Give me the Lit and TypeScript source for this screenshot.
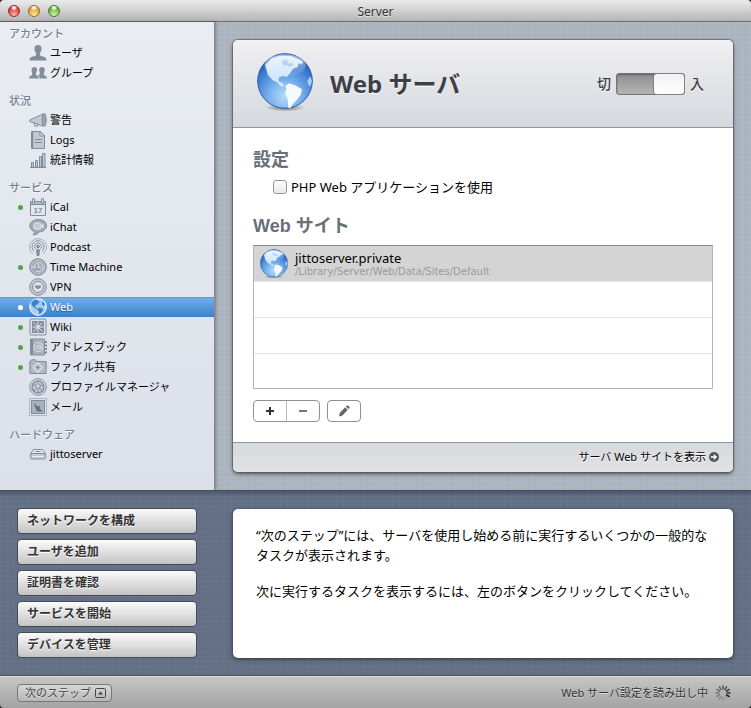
import { LitElement, html, css, svg, nothing } from "lit";
import type { SVGTemplateResult, TemplateResult } from "lit";
import { customElement, property, state } from "lit/decorators.js";
import { classMap } from "lit/directives/class-map.js";

interface Item {
  id: string;
  label: string;
  running?: boolean;
}

interface Section {
  title: string;
  items: Item[];
}

const SECTIONS: Section[] = [
  {
    title: "アカウント",
    items: [
      { id: "user", label: "ユーザ" },
      { id: "group", label: "グループ" },
    ],
  },
  {
    title: "状況",
    items: [
      { id: "alert", label: "警告" },
      { id: "logs", label: "Logs" },
      { id: "stats", label: "統計情報" },
    ],
  },
  {
    title: "サービス",
    items: [
      { id: "ical", label: "iCal", running: true },
      { id: "ichat", label: "iChat" },
      { id: "podcast", label: "Podcast" },
      { id: "timemachine", label: "Time Machine", running: true },
      { id: "vpn", label: "VPN" },
      { id: "web", label: "Web", running: true },
      { id: "wiki", label: "Wiki", running: true },
      { id: "addressbook", label: "アドレスブック", running: true },
      { id: "files", label: "ファイル共有", running: true },
      { id: "profile", label: "プロファイルマネージャ" },
      { id: "mail", label: "メール" },
    ],
  },
  {
    title: "ハードウェア",
    items: [{ id: "server", label: "jittoserver" }],
  },
];

const STEPS = [
  "ネットワークを構成",
  "ユーザを追加",
  "証明書を確認",
  "サービスを開始",
  "デバイスを管理",
];

const INK = "#828d9c";
const PALE = "#c3c9d2";

const ICONS: Record<string, SVGTemplateResult> = {
  user: svg`<path fill=${INK} d="M9 1c2.300 0 3.600 1.500 3.600 3.700 0 1.900-.8 3.300-1.700 4.300v1.700c0 .8 1 1.200 3 1.800 2.500.6 3.600 1.300 3.600 4H.5c0-2.700 1.100-3.400 3.600-4 2-.6 3-1 3-1.800V9C6.200 8 5.400 6.600 5.400 4.700 5.400 2.500 6.700 1 9 1z"/>`,
  group: svg`<g fill=${INK}><path d="M5.500 3c1.700 0 2.600 1.100 2.600 2.800 0 1.500-.6 2.400-1.200 3.100v1.600c0 1 3 1 3 4H0c0-3 3.200-3 3.200-4V8.900C2.900 8.300 2.500 7.300 2.500 5.800 2.500 4.100 3.800 3 5.500 3z"/><path d="M13 3c1.700 0 2.800 1.100 2.800 2.800 0 1.500-.5 2.400-1 3.100v1.600c0 1 3.200 1 3.200 4h-7.300c-.1-2.200-1.300-3.100-2-3.500 1.200-.4 2.300-.4 2.300-1V8.900c-.4-.6-.8-1.600-.8-3.100C10.200 4.100 11.300 3 13 3z"/></g>`,
  alert: svg`<g stroke=${INK} fill=${PALE}><path d="M.8 9 14 3v12L.8 10.500z"/><path d="M5.500 12v3h3.500v-2" fill="none"/><ellipse cx="15.200" cy="9" rx="2" ry="6.500" fill="#9aa4b1"/></g>`,
  logs: svg`<g stroke=${INK} fill=${PALE}><path d="M2.500.5h9l4 4v13h-13z"/><path fill="#e4e7ec" d="M11 .5v4.500h4.500z"/><path d="M3.500 1v16" stroke-width="1.500"/><path d="M6 8.500h7M6 11.500h7"/></g>`,
  stats: svg`<g stroke=${INK} fill=${PALE}><path d="M2.500 11.500h2V16h-2zM6.500 9.500h2V16h-2zM10.500 5.500h2V16h-2zM13.500 2.500h2.500V16h-2.500z"/><path d="M1 16.500h16"/></g>`,
  ical: svg`<g stroke=${INK} fill="none"><path fill="#e3e6eb" d="M1.500 3.500h15v14h-15z"/><path fill=${INK} fill-opacity=".5" d="M1.500 3.500h15v3h-15z"/><path fill="#e8ebf0" d="M3.500.8h2v4h-2zM12.500.8h2v4h-2z"/></g><text x="9" y="15" text-anchor="middle" font-size="8" font-weight="bold" font-family="Liberation Sans, sans-serif" fill=${INK}>17</text>`,
  ichat: svg`<path fill="#a2aab6" stroke=${INK} d="M9.500 1.500c4.500 0 8 2.500 8 6.200s-3.500 6.200-7.500 6.200c-1 2-3.500 3.300-6 3 1.200-1 1.400-2.500 1-3.600C2.300 12.300.8 10.200.8 7.800c0-3.700 4-6.300 8.700-6.300z"/><rect x="5" y="5" width="7" height="6" rx="1.500" fill=${PALE} stroke="#e8ebf0"/><path fill="#e8ebf0" d="m12 8 2.500-2.500v5z"/>`,
  podcast: svg`<g fill="none" stroke=${INK}><path d="M4 16a8.500 8.500 0 1 1 10 0" stroke="#a3abb7"/><path d="M5.300 13.500a6 6 0 1 1 7.400 0"/><path d="M6.500 11a3.500 3.500 0 1 1 5 0"/></g><circle cx="9" cy="8.500" r="1.800" fill=${INK}/><path fill=${INK} d="M7 11.500q2-1 4 0L10.300 18H7.700z"/>`,
  timemachine: svg`<circle cx="9" cy="9" r="8.300" fill="#a0a8b5" stroke=${INK}/><circle cx="9" cy="9" r="6.800" fill="none" stroke=${PALE}/><path fill="none" stroke="#e2e6eb" d="M5 9.500A4.500 4.500 0 1 1 7 13M3.200 8.200 5 10.200l2-2M9.500 6v3.500H12"/>`,
  vpn: svg`<circle cx="9" cy="9" r="8.300" fill=${PALE} stroke=${INK}/><circle cx="9" cy="9" r="5.500" fill="#dfe2e8" stroke=${INK}/><path fill=${INK} d="M6 7.500h6V9.500h-1l-1 1.500H8L7 9.500H6z"/>`,
  web: svg`<circle cx="9" cy="9" r="8.300" fill="#a9cdf0" stroke="#fff"/><path fill="#3f80c8" d="M2 5.500C3 3.500 5 2 7.500 1.300l1 1.500 2 .5-1 2L7.500 7 6 7.500l.5 2L9 10.200l-.5 1.300L5 9.500 3 7.500zM10 9.800l3 .5 1.200 1.700-1.500 2.500-2.500 2-.3-3-1.400-2zM13 3l3 3-1 2-2-1.500z"/>`,
  wiki: svg`<rect x="1" y="1" width="16" height="16" rx="1" fill="#dfe2e8" stroke=${INK}/><rect x="3" y="3" width="12" height="12" fill=${INK}/><path stroke="#e2e6eb" d="M9 3.500v11M3.500 9h11M4.500 4.500l9 9M13.500 4.500l-9 9"/><circle cx="9" cy="9" r="1.500" fill="#e2e6eb"/>`,
  addressbook: svg`<path fill="#a9b1bd" stroke=${INK} d="M1.500 1h14v16h-14z"/><path stroke=${INK} stroke-width="2" d="M3 1v16"/><path stroke=${INK} stroke-width="2" stroke-dasharray="2 1.500" d="M17 3v13"/><circle cx="9.500" cy="9" r="4.500" fill="none" stroke="#dfe3e8"/><circle cx="9.500" cy="9" r="1.700" fill="none" stroke="#dfe3e8"/><path fill="none" stroke="#dfe3e8" d="M11.300 7v3q1 1 2-.5"/>`,
  files: svg`<path fill="#b1b8c3" stroke=${INK} d="M.8 15.500v-12h1l.7-1.700h4l.8 1.700h9.900v12z"/><path fill=${PALE} stroke="#eef0f3" d="m8.800 4.500 5 5-5 5-5-5z"/><path fill=${INK} d="m8.800 7 2 3H9.500v1.500H8V10H6.800z"/>`,
  profile: svg`<circle cx="9" cy="9" r="8.300" fill="#dfe2e8" stroke=${INK}/><circle cx="9" cy="9" r="6" fill=${PALE} stroke=${INK} stroke-width="1.500"/><circle cx="9" cy="8" r="2.200" fill="#dfe2e8" stroke=${INK}/><path stroke=${INK} d="M9 10.500V15M6.800 8 3.500 6.500M11.200 8l3.300-1.500M7.500 10l-3 3.500M10.500 10l3 3.500"/>`,
  mail: svg`<rect x=".5" y=".5" width="17" height="17" fill="#dfe2e8" stroke=${INK} stroke-dasharray="1 1"/><rect x="2.500" y="2.500" width="13" height="13" fill="#a9b1bd" stroke=${INK}/><path fill="#66717f" d="m5 4.500 3.500 4 3-.7-1 2.500 3.300 3.200H8.500L6.300 10z"/>`,
  server: svg`<g stroke=${INK} fill=${PALE}><path fill="#e3e6eb" d="m1.500 9 3-4.500h9l3 4.500z"/><rect x="1.500" y="8.500" width="15" height="5.500" rx="1.500"/><path d="M3.500 11.500h11" stroke="#eef0f3"/><path d="M6.500 6.500h5"/></g>`,
};

function globe(id: string): TemplateResult {
  return html`<svg class="globe" viewBox="0 0 168 177" aria-hidden="true">
    <defs>
      <radialGradient id="${id}-sea" cx="50%" cy="78%" r="82%">
        <stop offset="0" stop-color="#b4dcfa" />
        <stop offset=".35" stop-color="#7ab2ee" />
        <stop offset=".7" stop-color="#3d7bd2" />
        <stop offset="1" stop-color="#164798" />
      </radialGradient>
      <radialGradient id="${id}-shade">
        <stop offset="0" stop-color="#000" stop-opacity=".5" />
        <stop offset="1" stop-color="#000" stop-opacity="0" />
      </radialGradient>
      <linearGradient id="${id}-gloss" x1="0" y1="0" x2="0" y2="1">
        <stop offset="0" stop-color="#fff" stop-opacity=".6" />
        <stop offset="1" stop-color="#fff" stop-opacity="0" />
      </linearGradient>
    </defs>
    <ellipse cx="84" cy="164" rx="60" ry="12" fill="url(#${id}-shade)" />
    <circle cx="84" cy="84" r="82" fill="url(#${id}-sea)" stroke="#2a5fb0" stroke-width="3" />
    <path
      fill="#d3e7fb"
      d="M25 35 44 16 68 8l34 1 24 10 12 7-4 9-9-5-3 12-14 5-9 14-10 11-11-3-13 5 1 12 12 4 2 11-10-2-9-11-14-6-15-17z"
    />
    <path fill="#8fbcee" d="m74 25 12-7 9 6-2 10 11-6 6 8-14 5-8-5-10 2z" />
    <path fill="#f4faff" d="m85 98 12-7 20 7 18 11-4 17-11 14-12 12-7 12-7 1-2-26-8-19 4-12z" />
    <path fill="#a9d2f8" d="m152 82 8-12 5 14-5 16-8-7z" />
    <ellipse cx="84" cy="38" rx="62" ry="34" fill="url(#${id}-gloss)" />
  </svg>`;
}

@customElement("server-sidebar")
export class ServerSidebar extends LitElement {
  @property() selected = "web";

  static styles = css`
    :host {
      display: block;
      padding-top: 3px;
      font-size: 11px;
      background: linear-gradient(#e9edf2, #dbe0e9);
      border-right: 1px solid #85898f;
      box-shadow: 1px 0 3px rgba(0, 0, 0, 0.3);
    }
    .section {
      margin-bottom: 9px;
    }
    .title {
      margin: 0;
      padding-left: 9px;
      font-size: 11px;
      font-weight: 500;
      line-height: 18px;
      color: #75808e;
      text-shadow: 0 1px 0 #fff;
    }
    .items {
      margin: 0;
      padding: 0;
      list-style: none;
    }
    .item {
      display: grid;
      grid-template-columns: 5px 18px 1fr;
      column-gap: 6px;
      align-items: center;
      height: 20px;
      padding-left: 18px;
      color: #000;
      text-decoration: none;
      line-height: 20px;
      white-space: nowrap;
    }
    .label {
      margin-left: -3px;
    }
    .icon-slot {
      display: flex;
    }
    .icon {
      width: 18px;
      height: 18px;
    }
    .dot {
      width: 5px;
      height: 5px;
      border-radius: 50%;
    }
    .running {
      background: #4ca64a;
    }
    .selected {
      color: #fff;
      background: linear-gradient(#73b1e8, #3f7fcc);
      box-shadow: inset 0 1px 0 #5b9cd8;
      text-shadow: 0 1px 1px rgba(0, 30, 90, 0.5);
    }
    .selected .dot {
      background: #fff;
    }
  `;

  render() {
    return html`<nav aria-label="Server">
      ${SECTIONS.map(
        (s) => html`<section class="section">
          <h2 class="title">${s.title}</h2>
          <ul class="items">
            ${s.items.map((i) => this.renderItem(i))}
          </ul>
        </section>`
      )}
    </nav>`;
  }

  private renderItem(i: Item) {
    const on = i.id === this.selected;
    return html`<li>
      <a
        class=${classMap({ item: true, selected: on })}
        href="#${i.id}"
        aria-current=${on ? "page" : nothing}
      >
        <span class=${classMap({ dot: true, running: !!i.running })}></span>
        <span class="icon-slot"><svg class="icon" viewBox="0 0 18 18" aria-hidden="true">${ICONS[i.id]}</svg></span>
        <span class="label">${i.label}</span>
      </a>
    </li>`;
  }
}

@customElement("web-panel")
export class WebPanel extends LitElement {
  @state() private enabled = true;

  static styles = css`
    :host {
      display: block;
      background: #fff;
      border-radius: 5px;
      overflow: hidden;
      box-shadow: 0 0 1px 1px rgba(60, 66, 76, 0.5), 0 2px 4px rgba(0, 0, 0, 0.5);
    }
    .head {
      display: flex;
      align-items: center;
      height: 87px;
      padding: 0 29px 0 24px;
      border-bottom: 1px solid #92969b;
      background: linear-gradient(#f0eff2, #d5d9dd);
    }
    .globe {
      display: block;
    }
    .head .globe {
      width: 56px;
      height: 59px;
      padding-bottom: 2px;
    }
    .name {
      flex: 1;
      margin: 0 0 0 17px;
      font-size: 24px;
      line-height: 32px;
      font-weight: 700;
      color: #3c4046;
      text-shadow: 0 1px 0 #fff;
    }
    .power {
      display: flex;
      align-items: center;
      gap: 5px;
      font-size: 14px;
      line-height: 20px;
      font-weight: 500;
      color: #3c4046;
      text-shadow: 0 1px 0 #fff;
    }
    .switch {
      appearance: none;
      display: flex;
      width: 69px;
      height: 22px;
      margin: 0;
      border: 1px solid #717376;
      border-radius: 3px;
      background: linear-gradient(#8f8f8f, #b4b4b4);
      box-shadow: inset 0 1px 2px rgba(0, 0, 0, 0.35);
    }
    .switch::before {
      content: "";
      box-sizing: border-box;
      width: 30px;
      height: 20px;
      border-radius: 3px;
      background: linear-gradient(#f1f1f1, #fff);
      box-shadow: 0 0 0 1px #808284;
    }
    .switch:checked {
      justify-content: flex-end;
    }
    .body {
      padding: 20px;
    }
    .heading {
      margin: 0;
      font-family: "Liberation Sans", "Noto Sans CJK JP", sans-serif;
      font-size: 18px;
      line-height: 24px;
      font-weight: 700;
      color: #696f77;
    }
    .option {
      display: flex;
      align-items: center;
      gap: 4px;
      margin: 5px 0 17px 20px;
      font-size: 13px;
      line-height: 20px;
    }
    .check {
      appearance: none;
      width: 14px;
      height: 14px;
      margin: 0;
      border: 1px solid #92959a;
      border-radius: 3px;
      background: linear-gradient(#fff, #e8e8e8);
    }
    .check:checked {
      background: #3f7fcc;
    }
    .sites {
      margin: 7px 0 11px;
      padding: 0;
      list-style: none;
      border: 1px solid #b4b4b4;
      border-top-color: #8a8a8a;
    }
    .site {
      display: flex;
      align-items: center;
      gap: 7px;
      box-sizing: border-box;
      height: 36px;
      padding-left: 6px;
      border-bottom: 1px solid #e6e6e6;
    }
    .site:last-child {
      height: 34px;
      border-bottom: none;
    }
    .chosen {
      background: #d4d4d4;
    }
    .site .globe {
      width: 28px;
      height: 30px;
    }
    .host {
      display: block;
      font-size: 13px;
      line-height: 16px;
    }
    .path {
      display: block;
      font-family: "DejaVu Sans", sans-serif;
      font-size: 10px;
      line-height: 12px;
      color: #999;
    }
    .tools {
      display: flex;
      gap: 7px;
    }
    .pair {
      display: flex;
      border: 1px solid #919191;
      border-radius: 4px;
    }
    .tool {
      display: flex;
      align-items: center;
      justify-content: center;
      width: 32px;
      height: 20px;
      padding: 0;
      border: none;
      background: none;
    }
    .pair .tool + .tool {
      box-shadow: inset 1px 0 0 #bbb;
      width: 33px;
    }
    .glyph {
      width: 12px;
      height: 12px;
    }
    .foot {
      display: flex;
      justify-content: flex-end;
      align-items: center;
      height: 27px;
      padding: 0 14px 2px 0;
      border-top: 1px solid #92969b;
      background: linear-gradient(#d6d9dd, #e2e2e4);
    }
    .view {
      display: flex;
      align-items: center;
      gap: 3px;
      color: #000;
      text-decoration: none;
      font-size: 11px;
      line-height: 20px;
      text-shadow: 0 1px 0 #fff;
    }
    .arrow {
      width: 10px;
      height: 10px;
    }
  `;

  render() {
    return html`
      <header class="head">
        ${globe("large")}
        <h1 class="name">Web サーバ</h1>
        <label class="power">
          <span>切</span>
          <input
            class="switch"
            type="checkbox"
            role="switch"
            .checked=${this.enabled}
            @change=${(e: Event) => (this.enabled = (e.target as HTMLInputElement).checked)}
          />
          <span>入</span>
        </label>
      </header>
      <div class="body">
        <h2 class="heading">設定</h2>
        <label class="option"><input class="check" type="checkbox" />PHP Web アプリケーションを使用</label>
        <h2 class="heading">Web サイト</h2>
        <ul class="sites">
          <li class="site chosen">
            ${globe("small")}
            <span><span class="host">jittoserver.private</span><span class="path">/Library/Server/Web/Data/Sites/Default</span></span>
          </li>
          <li class="site"></li>
          <li class="site"></li>
          <li class="site"></li>
        </ul>
        <div class="tools">
          <div class="pair">
            <button class="tool" type="button" aria-label="追加">
              <svg class="glyph" viewBox="0 0 12 12"><path d="M6 2v8M2 6h8" stroke="#333" stroke-width="2" /></svg>
            </button>
            <button class="tool" type="button" aria-label="削除">
              <svg class="glyph" viewBox="0 0 12 12"><path d="M2 6h8" stroke="#777" stroke-width="2" /></svg>
            </button>
          </div>
          <div class="pair">
            <button class="tool" type="button" aria-label="編集">
              <svg class="glyph" viewBox="0 0 12 12">
                <path d="M1 11.500l.7-3.500L7.200 2.300l2.500 2.500L4.500 10.500zM7.900 1.600 9 .5q.5-.5 1 0L11.500 2q.5.500 0 1l-1.100 1.100z" fill="#666" />
              </svg>
            </button>
          </div>
        </div>
      </div>
      <footer class="foot">
        <a class="view" href="#sites">
          サーバ Web サイトを表示
          <svg class="arrow" viewBox="0 0 10 10" aria-hidden="true">
            <circle cx="5" cy="5" r="5" fill="#555" />
            <path d="M1.800 4.200h3V2.100L8.300 5 4.800 7.900V5.800h-3z" fill="#fff" />
          </svg>
        </a>
      </footer>
    `;
  }
}

@customElement("app-root")
export class AppRoot extends LitElement {
  static styles = css`
    :host {
      display: flex;
      flex-direction: column;
      min-height: 100vh;
      background: #222;
      color: #000;
      font-family: "Noto Sans", "Noto Sans CJK JP", sans-serif;
    }
    .titlebar {
      display: grid;
      grid-template-columns: 1fr auto 1fr;
      align-items: center;
      height: 21px;
      border-bottom: 1px solid #6b6b6b;
      border-radius: 4px 4px 0 0;
      background: linear-gradient(#ebebeb, #b5b5b5);
    }
    .lights {
      display: flex;
      gap: 8px;
      padding-left: 8px;
    }
    .light {
      width: 12px;
      height: 12px;
      padding: 0;
      border: 1px solid;
      border-radius: 50%;
    }
    .red {
      border-color: #8d2b2b;
      background: radial-gradient(circle at 50% 15%, #fff 8%, transparent 35%), radial-gradient(circle at 50% 90%, #ffb6a6, #d9343a 70%);
    }
    .yellow {
      border-color: #99662a;
      background: radial-gradient(circle at 50% 15%, #fff 8%, transparent 35%), radial-gradient(circle at 50% 90%, #ffee9c, #e49a30 70%);
    }
    .green {
      border-color: #4c7a33;
      background: radial-gradient(circle at 50% 15%, #fff 8%, transparent 35%), radial-gradient(circle at 50% 90%, #d9f7a0, #63ad40 70%);
    }
    .caption {
      margin: 0;
      padding-top: 2px;
      font-size: 12px;
      line-height: 20px;
      font-weight: 400;
      color: #333;
      text-shadow: 0 1px 0 rgba(255, 255, 255, 0.6);
    }
    .upper,
    .lower {
      display: grid;
      grid-template-columns: 215px 1fr;
    }
    .upper {
      flex: 1;
      background:
        repeating-linear-gradient(90deg, rgba(255, 255, 255, 0.04) 0 1px, transparent 1px 3px, rgba(0, 0, 0, 0.01) 3px 4px, transparent 4px 7px),
        repeating-linear-gradient(rgba(255, 255, 255, 0.04) 0 1px, transparent 1px 2px, rgba(0, 0, 0, 0.01) 2px 3px, transparent 3px 5px),
        #acb4bf;
    }
    .main {
      padding: 18px;
    }
    .lower {
      border-top: 1px solid #474f5e;
      background:
        linear-gradient(rgba(20, 28, 44, 0.3), transparent 6px),
        repeating-linear-gradient(90deg, rgba(255, 255, 255, 0.02) 0 1px, transparent 1px 3px, rgba(0, 0, 0, 0.02) 3px 4px, transparent 4px 7px),
        repeating-linear-gradient(rgba(255, 255, 255, 0.02) 0 1px, transparent 1px 2px, rgba(0, 0, 0, 0.02) 2px 3px, transparent 3px 5px),
        #647086;
    }
    .steps {
      display: flex;
      flex-direction: column;
      gap: 5px;
      padding: 17px 18px 18px 17px;
    }
    .step {
      height: 26px;
      padding: 0 9px;
      border: 1px solid #454a54;
      border-radius: 4px;
      background: linear-gradient(#fbfbfb, #c4c4c4);
      color: #333;
      font-family: inherit;
      font-size: 12px;
      line-height: 20px;
      font-weight: 700;
      text-align: left;
      text-shadow: 0 1px 0 #fff;
    }
    .note {
      margin: 18px;
      padding: 16px 23px;
      border-radius: 5px;
      background: #fff;
      box-shadow: 0 1px 4px rgba(0, 0, 0, 0.6);
      font-size: 13px;
      line-height: 20px;
    }
    .para {
      margin: 0 0 16px;
    }
    .status {
      display: flex;
      justify-content: space-between;
      align-items: center;
      height: 31px;
      padding: 0 20px 0 17px;
      border-top: 1px solid #dedede;
      border-radius: 0 0 4px 4px;
      background: linear-gradient(#c6c6c6, #a3a3a3);
      box-shadow: 0 -1px 0 #4b4f57;
      font-size: 11px;
      line-height: 16px;
      color: #333;
    }
    .next {
      display: flex;
      align-items: center;
      gap: 4px;
      height: 18px;
      padding: 0 5px 0 7px;
      border: 1px solid #777;
      border-radius: 4px;
      background: linear-gradient(#d6d6d6, #b8b8b8);
      font-family: inherit;
      font-size: 11px;
      line-height: 16px;
      color: #444;
      text-shadow: 0 1px 0 rgba(255, 255, 255, 0.5);
    }
    .box {
      width: 11px;
      height: 10px;
    }
    .progress {
      display: flex;
      align-items: center;
      gap: 7px;
      text-shadow: 0 1px 0 rgba(255, 255, 255, 0.5);
    }
    .spinner {
      width: 16px;
      height: 16px;
    }
  `;

  render() {
    return html`
      <header class="titlebar">
        <div class="lights">
          <button class="light red" type="button" aria-label="閉じる"></button>
          <button class="light yellow" type="button" aria-label="しまう"></button>
          <button class="light green" type="button" aria-label="拡大"></button>
        </div>
        <p class="caption">Server</p>
      </header>
      <div class="upper" lang="ja">
        <server-sidebar selected="web"></server-sidebar>
        <main class="main"><web-panel></web-panel></main>
      </div>
      <div class="lower" lang="ja">
        <div class="steps">
          ${STEPS.map((s) => html`<button class="step" type="button">${s}</button>`)}
        </div>
        <div class="note">
          <p class="para">“次のステップ”には、サーバを使用し始める前に実行するいくつかの一般的なタスクが表示されます。</p>
          <p class="para">次に実行するタスクを表示するには、左のボタンをクリックしてください。</p>
        </div>
      </div>
      <footer class="status" lang="ja">
        <button class="next" type="button">
          次のステップ
          <svg class="box" viewBox="0 0 11 10" aria-hidden="true">
            <rect x=".5" y=".5" width="10" height="9" rx="1" fill="none" stroke="#444" />
            <path d="M3 6.500 5.500 3.500 8 6.500z" fill="#444" />
          </svg>
        </button>
        <span class="progress" role="status">
          Web サーバ設定を読み出し中
          <svg class="spinner" viewBox="0 0 16 16" aria-hidden="true">
            ${Array.from({ length: 12 }, (_, k) => {
              const a = (k * Math.PI) / 6;
              const [dx, dy] = [Math.sin(a), -Math.cos(a)];
              const fade = 1 - ((16 - k) % 12) * 0.08;
              return svg`<line x1=${8 + dx * 4} y1=${8 + dy * 4} x2=${8 + dx * 7} y2=${8 + dy * 7} stroke="#222" stroke-width="1.500" stroke-linecap="round" opacity=${fade} />`;
            })}
          </svg>
        </span>
      </footer>
    `;
  }
}
